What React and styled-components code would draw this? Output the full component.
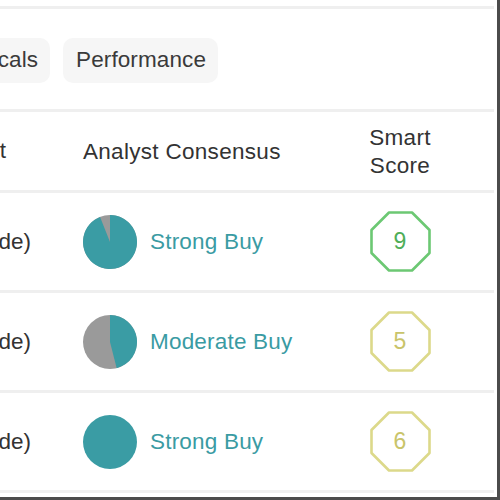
import React from "react";
import styled, { createGlobalStyle } from "styled-components";

const Global = createGlobalStyle`
  html, body { margin: 0; padding: 0; background: #fff; }
  body { font-family: "Liberation Sans", Arial, sans-serif; }
`;

const Frame = styled.div`
  width: 497px;
  height: 497px;
  border-right: 3px solid #4b4b4b;
  border-bottom: 3px solid #4b4b4b;
  overflow: hidden;
  background: #fff;
  display: flex;
  flex-direction: column;
`;

const Inner = styled.div`
  width: 494px;
  display: flex;
  flex-direction: column;
`;

const Divider = styled.div`
  height: 3px;
  background: #efefef;
  flex-shrink: 0;
`;

const TopGap = styled.div`
  height: 6px;
`;

const TabRow = styled.div`
  height: 100px;
  display: flex;
  align-items: center;
  padding-top: 2px;
  box-sizing: border-box;
`;

const TabClip = styled.div`
  width: 218px;
  display: flex;
  justify-content: flex-end;
  gap: 13px;
  overflow: hidden;
`;

const Pill = styled.div`
  flex-shrink: 0;
  height: 45px;
  padding: 0 12px 0 13px;
  border-radius: 10px;
  background: #f6f6f6;
  display: flex;
  align-items: center;
  font-size: 22.5px;
  letter-spacing: 0.1px;
  color: #3a3a3a;
  white-space: nowrap;
`;

const Grid = styled.div`
  display: grid;
  grid-template-columns: 40px 290px 140px 24px;
  align-items: center;
  height: ${(p) => p.$h}px;
`;

const ClipCell = styled.div`
  display: flex;
  justify-content: flex-end;
  overflow: hidden;
  white-space: nowrap;
  font-size: 22.5px;
  color: #333;
  padding-right: ${(p) => p.$pr || 0}px;
`;

const ClipText = styled.span`
  flex-shrink: 0;
`;

const HeadText = styled.div`
  font-size: 22.5px;
  letter-spacing: 0.3px;
  color: #333;
  padding-left: ${(p) => p.$pl || 0}px;
  text-align: ${(p) => p.$align || "left"};
  line-height: 28px;
  padding-top: 2px;
`;

const Consensus = styled.div`
  display: flex;
  align-items: center;
  gap: 13px;
  padding-left: 43px;
`;

const Rating = styled.span`
  font-size: 22.5px;
  letter-spacing: 0.2px;
  color: #3a9ba3;
  white-space: nowrap;
`;

const ScoreCell = styled.div`
  display: flex;
  justify-content: center;
`;

const Octagon = styled.div`
  position: relative;
  width: 61px;
  height: 61px;
  display: flex;
  align-items: center;
  justify-content: center;
  svg { position: absolute; inset: 0; }
`;

const ScoreNum = styled.span`
  position: relative;
  font-size: 23px;
  color: ${(p) => p.$color};
`;

const TEAL = "#3a9ca4";
const GRAY = "#9a9a9a";

function wedge(cx, cy, r, a0, a1) {
  const rad = (a) => (a * Math.PI) / 180;
  const x0 = cx + r * Math.sin(rad(a0));
  const y0 = cy - r * Math.cos(rad(a0));
  const x1 = cx + r * Math.sin(rad(a1));
  const y1 = cy - r * Math.cos(rad(a1));
  const large = a1 - a0 > 180 ? 1 : 0;
  return `M${cx},${cy} L${x0},${y0} A${r},${r} 0 ${large} 1 ${x1},${y1} Z`;
}

function Pie({ buy }) {
  const r = 27;
  const end = buy * 360;
  return (
    <svg width="54" height="54" viewBox="0 0 54 54">
      <circle cx="27" cy="27" r={r} fill={buy >= 1 ? TEAL : GRAY} />
      {buy > 0 && buy < 1 && <path d={wedge(27, 27, r, 0, end)} fill={TEAL} />}
    </svg>
  );
}

function Score({ value, color, text }) {
  return (
    <Octagon>
      <svg width="61" height="61" viewBox="0 0 61 61">
        <polygon
          points="19,1.5 42,1.5 59.5,19 59.5,42 42,59.5 19,59.5 1.5,42 1.5,19"
          fill="none"
          stroke={color}
          strokeWidth="2.6"
          strokeLinejoin="round"
        />
      </svg>
      <ScoreNum $color={text}>{value}</ScoreNum>
    </Octagon>
  );
}

const rows = [
  { up: "(12.40% Upside)", buy: 0.94, label: "Strong Buy", score: 9, color: "#6cc873", text: "#4fae58" },
  { up: "(3.85% Upside)", buy: 0.46, label: "Moderate Buy", score: 5, color: "#dcd98a", text: "#c9c46a" },
  { up: "(8.21% Upside)", buy: 1, label: "Strong Buy", score: 6, color: "#dcd98a", text: "#c9c46a" },
];

export default function App() {
  return (
    <>
      <Global />
      <Frame>
        <Inner>
          <TopGap />
          <Divider />
          <TabRow>
            <TabClip>
              <Pill>Technicals</Pill>
              <Pill>Performance</Pill>
            </TabClip>
          </TabRow>
          <Divider />
          <Grid $h={78}>
            <ClipCell $pr={34}>
              <ClipText>Price Target</ClipText>
            </ClipCell>
            <HeadText $pl={43}>Analyst Consensus</HeadText>
            <HeadText $align="center">
              Smart
              <br />
              Score
            </HeadText>
            <div />
          </Grid>
          {rows.map((r, i) => (
            <React.Fragment key={i}>
              <Divider />
              <Grid $h={97}>
                <ClipCell $pr={9}>
                  <ClipText>{r.up}</ClipText>
                </ClipCell>
                <Consensus>
                  <Pie buy={r.buy} />
                  <Rating>{r.label}</Rating>
                </Consensus>
                <ScoreCell>
                  <Score value={r.score} color={r.color} text={r.text} />
                </ScoreCell>
                <div />
              </Grid>
            </React.Fragment>
          ))}
          <Divider />
        </Inner>
      </Frame>
    </>
  );
}
